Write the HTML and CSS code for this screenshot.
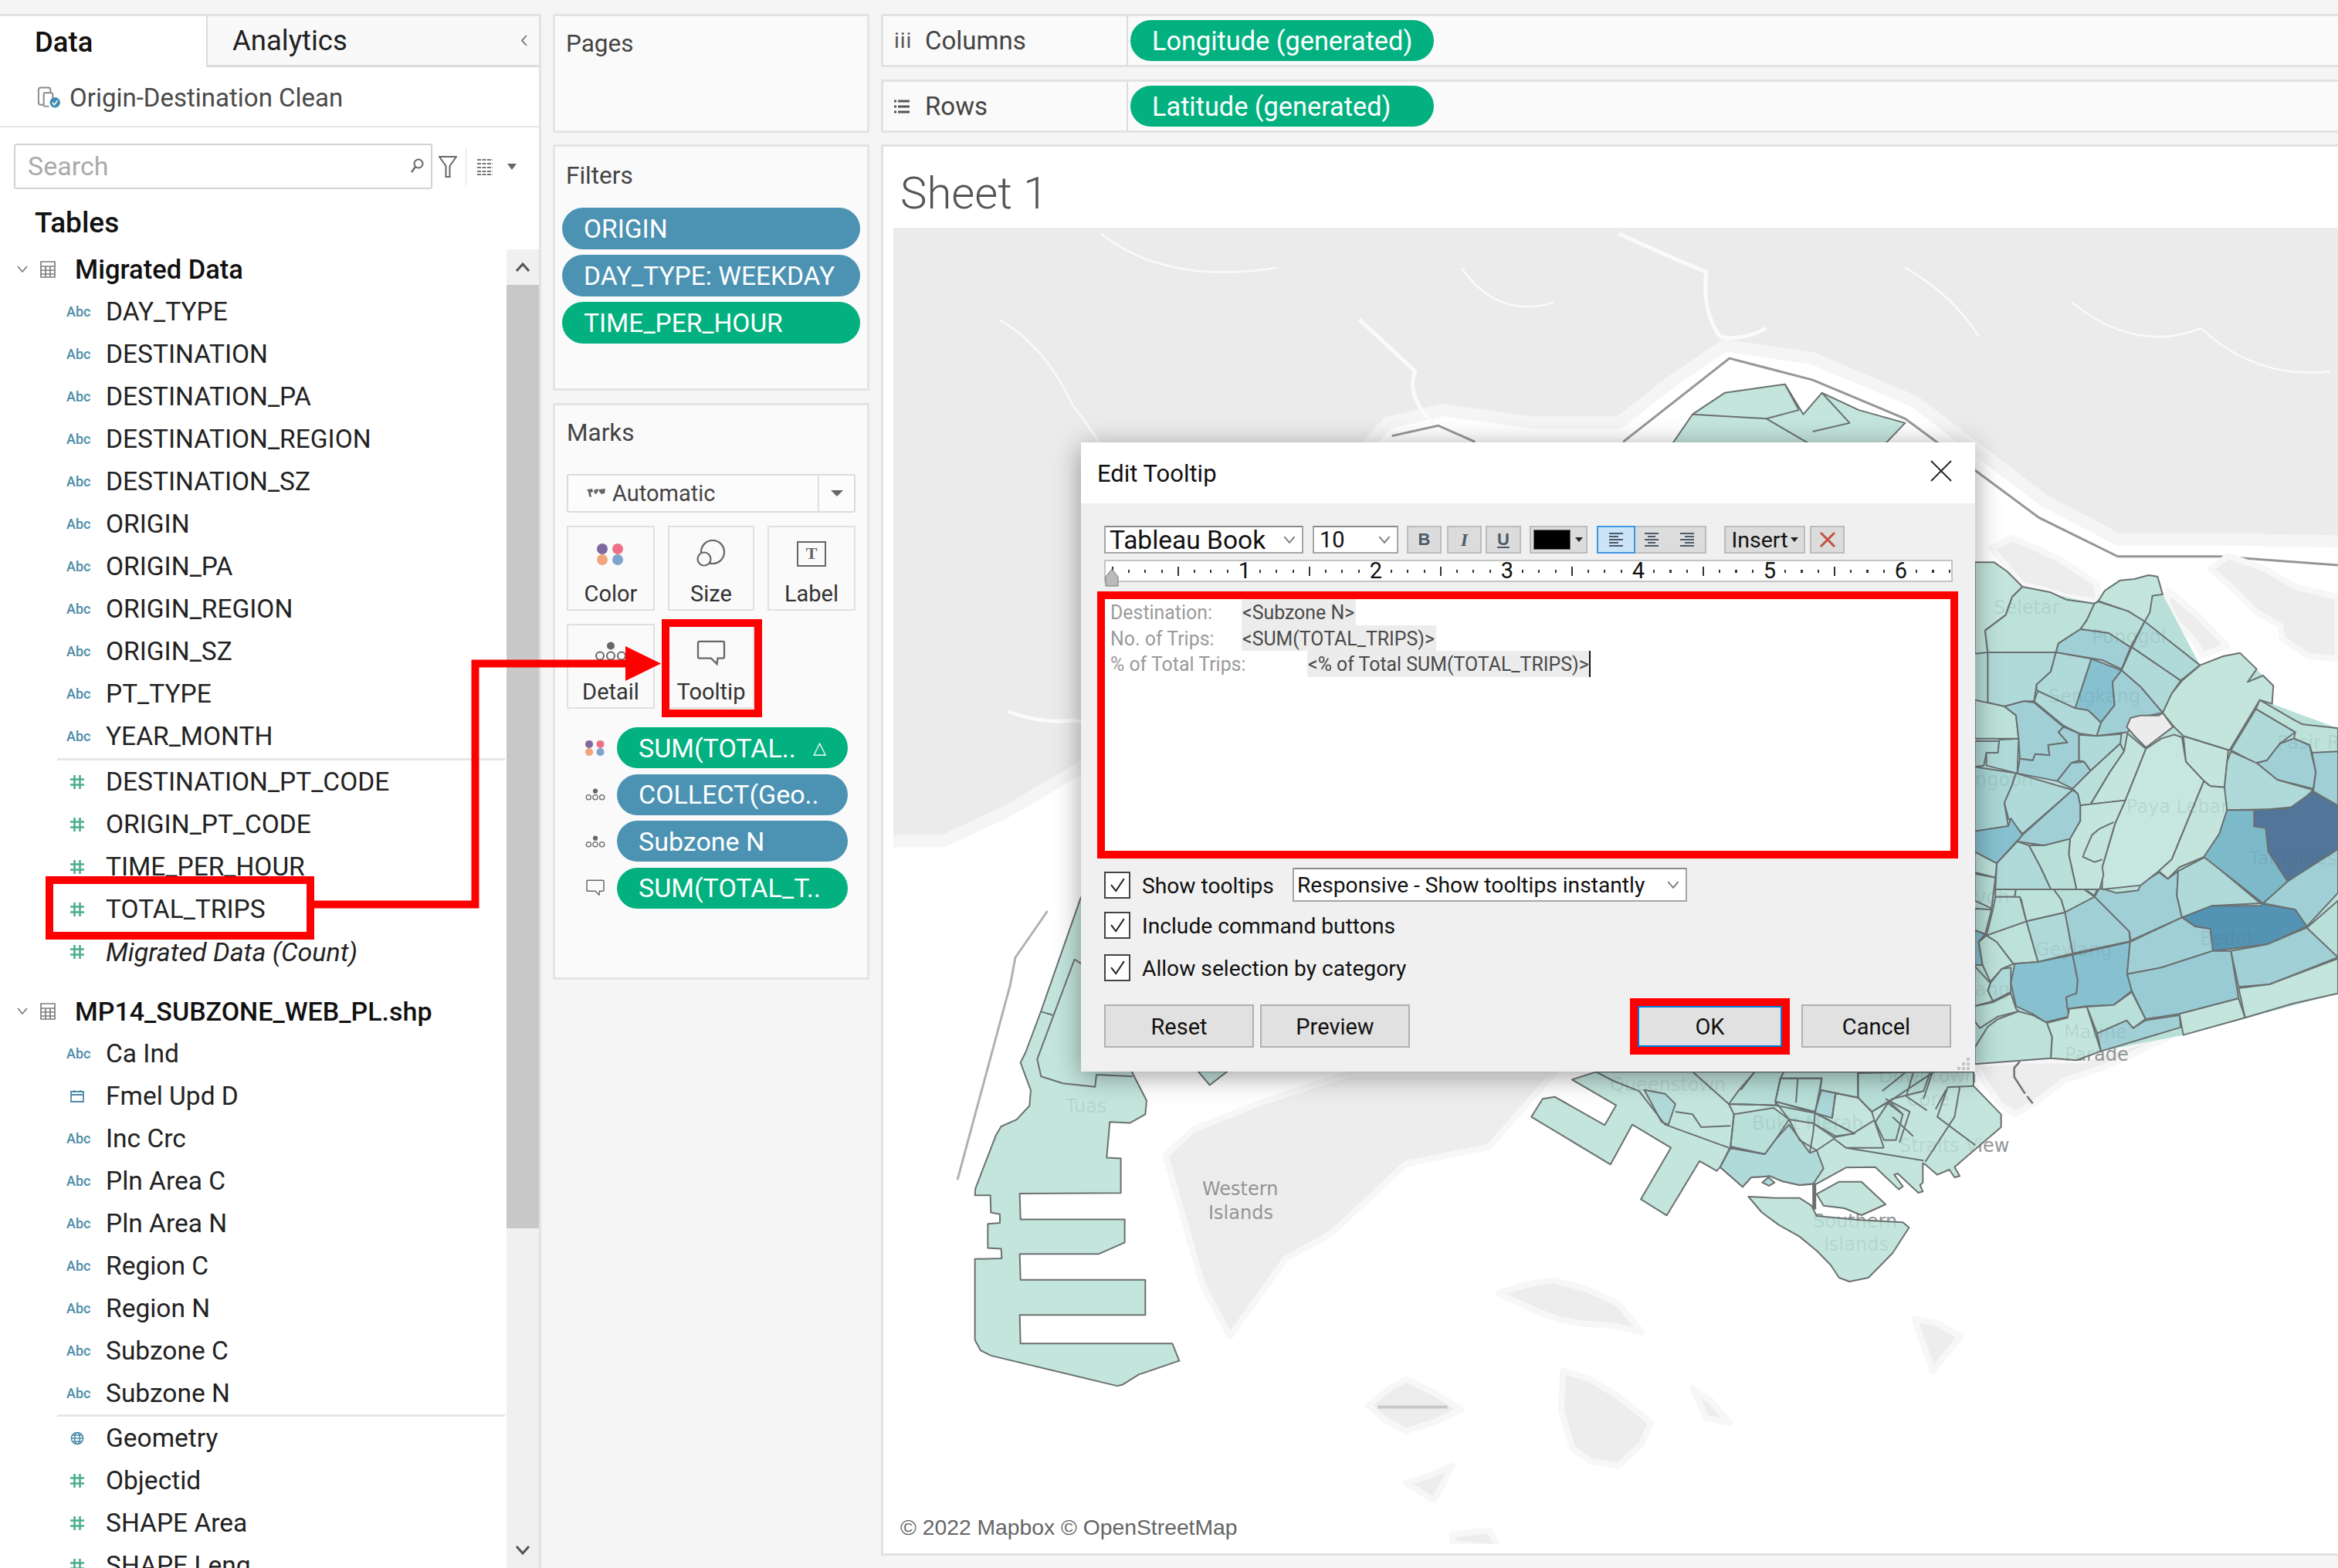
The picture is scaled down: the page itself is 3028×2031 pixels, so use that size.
FILE: index.html
```html
<!DOCTYPE html>
<html lang="en">
<head>
<meta charset="utf-8">
<title>Edit Tooltip</title>
<link rel="stylesheet" href="styles.css">
</head>
<body>
<svg class="defs" width="0" height="0" aria-hidden="true">
  <defs>
    <symbol id="hash" viewBox="0 0 18 18"><path d="M5.5 0V18M12.5 0V18M0 5.5H18M0 12.5H18" fill="none" stroke="currentColor" stroke-width="2.6"/></symbol>
    <symbol id="table" viewBox="0 0 20 22"><path d="M1 1H19V21H1ZM1 7H19M1 12H19M1 17H19M7 7V21M13 7V21" fill="none" stroke="#7d7d7d" stroke-width="1.7"/></symbol>
    <symbol id="chev" viewBox="0 0 14 9"><path d="M1 1L7 8L13 1" fill="none" stroke="#777" stroke-width="1.6"/></symbol>
    <symbol id="dots" viewBox="0 0 36 28"><circle cx="7" cy="7" r="7" fill="#7e6a9f"/><circle cx="27" cy="7" r="7" fill="#ee7088"/><circle cx="7" cy="21" r="7" fill="#f0a67b"/><circle cx="27" cy="21" r="7" fill="#7da3cf"/></symbol>
    <symbol id="detail" viewBox="0 0 42 24"><circle cx="21" cy="5" r="5" fill="#666"/><g fill="none" stroke="#666" stroke-width="2"><circle cx="7" cy="18" r="5"/><circle cx="21" cy="18" r="5"/><circle cx="35" cy="18" r="5"/></g></symbol>
    <symbol id="bubble" viewBox="0 0 40 36"><path d="M4 2H36Q38 2 38 4V23Q38 25 36 25H29L28 33L20 25H4Q2 25 2 23V4Q2 2 4 2Z" fill="none" stroke="#666" stroke-width="2.4"/></symbol>
    <symbol id="cal" viewBox="0 0 18 18"><path d="M1 3H17V16H1ZM1 7H17M5 1V4M13 1V4" fill="none" stroke="#4b8ca8" stroke-width="1.8"/></symbol>
    <symbol id="globe" viewBox="0 0 18 18"><g fill="none" stroke="#4b8ca8" stroke-width="1.5"><circle cx="9" cy="9" r="7.6"/><ellipse cx="9" cy="9" rx="3.4" ry="7.6"/><path d="M1.5 9H16.5M3 5H15M3 13H15"/></g></symbol>
    <symbol id="check" viewBox="0 0 34 35"><path d="M8 17L15 26L27 8" fill="none" stroke="#222" stroke-width="2.2"/></symbol>
    <symbol id="alignl" viewBox="0 0 22 22"><path d="M2 3H20M2 7H14M2 11H20M2 15H14M2 19H20" stroke="#4d5a6b" stroke-width="2"/></symbol>
    <symbol id="alignc" viewBox="0 0 22 22"><path d="M2 3H20M6 7H16M2 11H20M6 15H16M2 19H20" stroke="#4d5a6b" stroke-width="2"/></symbol>
    <symbol id="alignr" viewBox="0 0 22 22"><path d="M2 3H20M8 7H20M2 11H20M8 15H20M2 19H20" stroke="#4d5a6b" stroke-width="2"/></symbol>
  </defs>
</svg>

<div class="app">
  <aside class="data">
    <div class="tabs">
      <div class="tab tab-on">Data</div>
      <div class="tab tab-off">Analytics<svg class="tab-chev" viewBox="0 0 9 15"><path d="M8 1L2 7.5L8 14" fill="none" stroke="#666" stroke-width="1.6"/></svg></div>
    </div>
    <div class="source">
      <svg class="source-ic" viewBox="0 0 32 30">
        <path d="M3 5Q3 2 6 2H16Q19 2 19 5V9M3 5V22Q3 25 6 25H9M10 9H20Q22 9 22 11V16M10 9V27M10 27H17" fill="none" stroke="#8a8a8a" stroke-width="2"/>
        <circle cx="25" cy="22" r="7" fill="#3f8fb4"/><path d="M21.5 22L24 25L28.5 19.5" fill="none" stroke="#fff" stroke-width="1.6"/>
      </svg>
      <span>Origin-Destination Clean</span>
    </div>
    <div class="search-row">
      <div class="search">
        <span>Search</span>
        <svg class="search-ic" viewBox="0 0 18 20"><circle cx="11" cy="7" r="5.5" fill="none" stroke="#666" stroke-width="2"/><path d="M7 11L2 18" stroke="#666" stroke-width="2.4"/></svg>
      </div>
      <svg class="funnel" viewBox="0 0 24 30"><path d="M1 2H23L14.500 14V28H9.500V14Z" fill="none" stroke="#666" stroke-width="2"/></svg>
      <i class="search-div"></i>
      <svg class="grid-ic" viewBox="0 0 22 24"><path d="M1 3H21M1 8H21M1 13H21M1 18H21M1 22H21" stroke="#777" stroke-width="2" stroke-dasharray="5 1.500"/></svg>
      <svg class="caret" viewBox="0 0 12 8"><path d="M0 0H12L6 8Z" fill="#666"/></svg>
    </div>
    <h2 class="tables">Tables</h2>
    <div class="tree-wrap">
      <div class="tree">
        <div class="group"><svg class="g-chev"><use href="#chev"/></svg><svg class="g-table"><use href="#table"/></svg><b>Migrated Data</b></div>
        <div class="row"><span class="abc">Abc</span>DAY_TYPE</div>
        <div class="row"><span class="abc">Abc</span>DESTINATION</div>
        <div class="row"><span class="abc">Abc</span>DESTINATION_PA</div>
        <div class="row"><span class="abc">Abc</span>DESTINATION_REGION</div>
        <div class="row"><span class="abc">Abc</span>DESTINATION_SZ</div>
        <div class="row"><span class="abc">Abc</span>ORIGIN</div>
        <div class="row"><span class="abc">Abc</span>ORIGIN_PA</div>
        <div class="row"><span class="abc">Abc</span>ORIGIN_REGION</div>
        <div class="row"><span class="abc">Abc</span>ORIGIN_SZ</div>
        <div class="row"><span class="abc">Abc</span>PT_TYPE</div>
        <div class="row"><span class="abc">Abc</span>YEAR_MONTH</div>
        <div class="sep"></div>
        <div class="row"><svg class="hash"><use href="#hash"/></svg>DESTINATION_PT_CODE</div>
        <div class="row"><svg class="hash"><use href="#hash"/></svg>ORIGIN_PT_CODE</div>
        <div class="row"><svg class="hash"><use href="#hash"/></svg>TIME_PER_HOUR</div>
        <div class="row"><svg class="hash"><use href="#hash"/></svg>TOTAL_TRIPS</div>
        <div class="row row-it"><svg class="hash"><use href="#hash"/></svg>Migrated Data (Count)</div>
        <div class="group group-2"><svg class="g-chev"><use href="#chev"/></svg><svg class="g-table"><use href="#table"/></svg><b>MP14_SUBZONE_WEB_PL.shp</b></div>
        <div class="row"><span class="abc">Abc</span>Ca Ind</div>
        <div class="row"><svg class="hash cal"><use href="#cal"/></svg>Fmel Upd D</div>
        <div class="row"><span class="abc">Abc</span>Inc Crc</div>
        <div class="row"><span class="abc">Abc</span>Pln Area C</div>
        <div class="row"><span class="abc">Abc</span>Pln Area N</div>
        <div class="row"><span class="abc">Abc</span>Region C</div>
        <div class="row"><span class="abc">Abc</span>Region N</div>
        <div class="row"><span class="abc">Abc</span>Subzone C</div>
        <div class="row"><span class="abc">Abc</span>Subzone N</div>
        <div class="sep sep-2"></div>
        <div class="row"><svg class="hash cal"><use href="#globe"/></svg>Geometry</div>
        <div class="row"><svg class="hash"><use href="#hash"/></svg>Objectid</div>
        <div class="row"><svg class="hash"><use href="#hash"/></svg>SHAPE Area</div>
        <div class="row"><svg class="hash"><use href="#hash"/></svg>SHAPE Leng</div>
      </div>
      <div class="scroll">
        <div class="scroll-btn"><svg viewBox="0 0 20 14"><path d="M2 12L10 3L18 12" fill="none" stroke="#555" stroke-width="3"/></svg></div>
        <div class="scroll-thumb"></div>
        <div class="scroll-track"></div>
        <div class="scroll-btn"><svg viewBox="0 0 20 14"><path d="M2 2L10 11L18 2" fill="none" stroke="#555" stroke-width="3"/></svg></div>
      </div>
    </div>
  </aside>

  <section class="cards">
    <div class="card card-pages"><h3>Pages</h3></div>
    <div class="card card-filters">
      <h3>Filters</h3>
      <div class="pill fpill blue">ORIGIN</div>
      <div class="pill fpill blue">DAY_TYPE: WEEKDAY</div>
      <div class="pill fpill green">TIME_PER_HOUR</div>
    </div>
    <div class="card card-marks">
      <h3>Marks</h3>
      <div class="mark-select">
        <svg class="map-ic" viewBox="0 0 24 14"><path d="M0 2L7 1L8 5L5 6L6 12L3 11L2 5ZM9 3L14 1L15 4L12 8L10 7ZM15 2L24 1L23 7L19 8L17 6Z" fill="#666"/></svg>
        <span class="mark-name">Automatic</span>
        <span class="mark-arrow"><svg viewBox="0 0 16 8"><path d="M0 0H16L8 8Z" fill="#666"/></svg></span>
      </div>
      <div class="mark-btns">
        <div class="mbtn"><svg class="mi mi-dots"><use href="#dots"/></svg>Color</div>
        <div class="mbtn"><svg class="mi mi-size" viewBox="0 0 38 36"><circle cx="21" cy="16" r="15" fill="none" stroke="#666" stroke-width="2.2"/><circle cx="10" cy="25" r="8.500" fill="#fafafa" stroke="#666" stroke-width="2.2"/></svg>Size</div>
        <div class="mbtn"><svg class="mi mi-label" viewBox="0 0 38 33"><rect x="1" y="1" width="36" height="31" fill="none" stroke="#666" stroke-width="2"/><text x="19" y="23" class="label-t">T</text></svg>Label</div>
        <div class="mbtn"><svg class="mi mi-detail"><use href="#detail"/></svg>Detail</div>
        <div class="mbtn"><svg class="mi mi-bubble"><use href="#bubble"/></svg>Tooltip</div>
      </div>
      <div class="mrow"><svg class="mri"><use href="#dots"/></svg><div class="pill mpill green">SUM(TOTAL..<span class="delta">△</span></div></div>
      <div class="mrow"><svg class="mri"><use href="#detail"/></svg><div class="pill mpill blue">COLLECT(Geo..</div></div>
      <div class="mrow"><svg class="mri"><use href="#detail"/></svg><div class="pill mpill blue">Subzone N</div></div>
      <div class="mrow"><svg class="mri"><use href="#bubble"/></svg><div class="pill mpill green">SUM(TOTAL_T..</div></div>
    </div>
  </section>

  <main class="view">
    <div class="shelf">
      <div class="shelf-label"><span class="shelf-ic shelf-ic-c">iii</span>Columns</div>
      <div class="pill spill green">Longitude (generated)</div>
    </div>
    <div class="shelf">
      <div class="shelf-label"><svg class="shelf-ic-r" viewBox="0 0 20 18"><path d="M0 2H3M5 2H20M0 9H3M5 9H20M0 16H3M5 16H20" stroke="#555" stroke-width="3"/></svg>Rows</div>
      <div class="pill spill green">Latitude (generated)</div>
    </div>
    <div class="sheet">
      <div class="sheet-title">Sheet 1</div>
      <div class="map">
        <svg class="map-svg" viewBox="1157 295 1871 1705" preserveAspectRatio="none">
          <defs>
            <g id="labels">
              <text x="2582" y="795">Seletar</text>
              <text x="2709" y="833">Punggol</text>
              <text x="2653" y="910">Sengkang</text>
              <text x="2558" y="1018">ngoon</text>
              <text x="2754" y="1053">Paya Lebar</text>
              <text x="2913" y="1120">Tampines</text>
              <text x="2949" y="970">Pasir R</text>
              <text x="2849" y="1224">Bedok</text>
              <text x="2636" y="1238">Geylang</text>
              <text x="2673" y="1345">Marine</text>
              <text x="2674" y="1374">Parade</text>
              <text x="2558" y="1290">ang</text>
              <text x="2558" y="1170">voh</text>
              <text x="1380" y="1441">Tuas</text>
              <text x="2085" y="1413">Queenstown</text>
              <text x="2269" y="1463">Bukit Merah</text>
              <text x="2433" y="1402">Downtown</text>
              <text x="2469" y="1432">Core</text>
              <text x="2460" y="1492">Straits View</text>
              <text x="2348" y="1590">Southern</text>
              <text x="2362" y="1620">Islands</text>
              <text x="1557" y="1548">Western</text>
              <text x="1565" y="1579">Islands</text>
            </g>
          </defs>

          <g transform="translate(1150 280) scale(1.1976 1.1161)" class="ground">
            <polygon class="land" points="-20,-20 1600,-20 1600,378 1440,375 1330,375 1250,330 1110,215 1000,165 905,150 850,190 790,240 700,240 600,225 540,240 400,410 209,640 130,690 60,725 -20,725"/>
            <polygon class="plain" points="300,1090 330,1060 400,1030 500,995 720,995 650,1080 560,1100 520,1140 480,1180 430,1210 370,1300 340,1240"/>
            <polygon class="plain" points="660,1250 690,1240 720,1235 755,1245 790,1262 815,1295 785,1288 750,1285 725,1280 700,1270"/>
            <polygon class="plain" points="520,1380 540,1362 560,1350 590,1365 620,1385 590,1400 560,1410 535,1395"/>
            <polygon class="plain" points="730,1340 760,1350 790,1370 825,1400 815,1425 790,1450 760,1445 740,1430 728,1385"/>
            <polygon class="plain" points="870,1360 890,1375 910,1400 885,1395"/>
            <polygon class="plain" points="560,1470 585,1462 610,1450 600,1472 590,1490 575,1480"/>
            <polygon class="plain" points="610,1530 650,1525 660,1545 610,1540"/>
            <polygon class="plain" points="1110,1280 1135,1285 1160,1300 1145,1320 1130,1340 1120,1310"/>
            <path class="river" d="M790,20Q840,45 885,65Q880,110 900,140Q925,145 950,130"/>
            <path class="river" d="M510,120Q540,150 570,180Q560,210 590,240"/>
            <path class="river" d="M130,575Q170,590 200,585Q240,595 270,560"/>
            <path class="river river-thin" d="M230,20Q300,80 420,60M120,120Q170,150 200,220Q230,260 260,320M1280,100Q1350,160 1420,130Q1480,190 1560,180M620,60Q660,120 720,100M1100,60Q1150,90 1180,140"/>
            <path class="road" d="M530,1382H605"/>
            <path class="strait" d="M545,255L595,243L635,262M795,262L910,165L1000,190L1100,235L1245,350L1330,395L1440,395L1568,405"/>
          </g>

          <g transform="translate(2556 680) scale(.3333)" class="ground">
            <polygon class="plain" points="70,90 150,50 330,130 480,230 485,300 360,280 270,250 190,235 120,150"/>
            <polygon class="plain" points="755,255 870,350 985,470 890,505 850,440 790,380 750,300"/>
            <polygon class="plain" points="920,170 990,120 1130,170 1250,240 1416,280 1416,520 1300,510 1200,440 1190,390 1100,340 1000,240"/>
          </g>
          <g transform="translate(2556 1100) scale(.3333)" class="ground">
            <polygon class="plain" points="5,835 200,820 420,820 800,700 760,730 500,850 350,900 230,990 160,1030 100,990 30,880"/>
            <path class="dash" d="M180,825L158,850L158,885L200,950M208,960L230,988"/>
          </g>

          <use href="#labels" class="lab-under"/>

          <!-- north strip above the dialog -->
          <g transform="translate(1150 280) scale(1.1976 1.1161)" class="zones">
            <polygon class="c1" points="835,285 870,230 905,205 970,195 990,230 1010,205 1050,225 1100,240 1060,285"/>
            <path d="M870,230L950,235L1030,285M970,195L985,225L950,235M1010,205L1040,240L1000,250"/>
          </g>

          <!-- Tuas -->
          <g transform="translate(1200 1180) scale(.3333 .4464)" class="zones">
            <path class="strait thin" d="M120,780L325,215L345,135L470,0"/>
            <polygon class="c1" points="600,-40 445,290 385,410 365,440 405,520 400,565 350,605 290,625 270,650 190,805 188,825 248,825 250,875 285,880 285,905 238,908 238,978 290,980 292,1008 188,1010 188,1245 210,1275 250,1290 740,1378 760,1375 825,1345 982,1305 955,1255 365,1255 362,1172 850,1172 850,1070 365,1070 362,995 670,995 770,962 770,895 365,895 362,820 755,818 755,718 700,716 712,612 790,615 850,590 855,550 800,470 700,-40"/>
            <path d="M575,140L430,430L445,480L530,500L655,510L660,475L800,480M445,292L490,302M575,140L605,155"/>
            <polygon class="c1" points="1055,465 1100,505 1170,465"/>
          </g>

          <!-- south-central -->
          <g transform="translate(1960 1380) scale(.4464 .3333)" class="zones">
            <polygon class="c1" points="170,55 240,25 1335,25 1335,80 1415,190 1415,240 1280,395 1295,430 1280,435 1265,405 1230,425 1195,385 1188,380 1188,455 1180,465 1188,490 1175,495 1115,420 1105,425 1130,470 1118,482 1050,395 965,397 880,460 830,465 780,450 745,430 690,435 665,472 600,395 590,410 540,372 445,583 370,520 457,320 345,230 282,385 52,200 85,130 120,122 265,232 298,155"/>
            <polygon class="c2" points="625,150 760,155 775,50 785,25 700,25 655,95"/>
            <polygon class="c3" points="380,95 440,110 470,150 450,230 430,220"/>
            <polygon class="c2" points="640,190 755,165 800,210 760,290 730,345 630,315"/>
            <polygon class="c3" points="630,320 730,345 760,290 800,230 860,340 880,330 900,400 870,460 830,465 780,450 745,430 690,435 665,472 600,395"/>
            <polygon class="c3b" points="890,95 935,105 925,205 875,185"/>
            <polygon class="c2" points="775,50 895,50 895,90 875,180 760,140"/>
            <polygon class="c2" points="760,140 875,185 990,265 935,275 870,225 800,210"/>
            <polygon class="c2" points="1050,220 1090,140 1130,190 1110,290 1075,290"/>
            <polygon class="c1b" points="785,25 1000,25 1000,125 890,95 895,50 775,50"/>
            <polygon class="c2" points="1000,30 1210,25 1190,100 1100,130 1040,180 1000,125"/>
            <path d="M240,25L290,60L365,100L440,230L625,320L730,345M470,180L520,190L545,240L630,235M520,25L625,150L760,155L875,185L990,265M625,150L640,190L630,315L600,395M660,95L700,25M775,50L760,140M825,50L820,145M895,50L875,185L870,260L860,340M775,50L895,50M935,105L925,200M890,95L1000,125M1000,30L1000,125L1040,180L1085,145L1130,190M1040,180L1050,225L1075,320M1085,145L1220,25M1140,25L1070,100M800,210L830,290L880,330L930,285L965,320L1190,370M870,225L930,280L985,265L1045,215M965,320L1075,320M1335,80L1260,85L1230,200L1340,310M1295,85L1280,200L1195,375M1255,95L1225,170M1080,130L1150,180L1120,300M1100,200L1160,275M1215,30L1190,130M1160,30L1140,120L1200,175"/>
            <polygon class="c1" points="682,510 760,515 830,515 865,545 880,585 1000,600 1130,610 1148,630 1100,730 1030,825 975,840 945,825 920,775 880,720 830,665 770,620 720,570"/>
            <polygon class="c1" points="880,500 945,452 1010,452 1080,540 1010,582 960,555 900,545"/>
            <polygon class="c3" points="722,455 740,435 758,455 742,468"/>
            <path class="cause" d="M873,460V560"/>
          </g>

          <!-- east, lower half -->
          <g transform="translate(2556 1100) scale(.3333)" class="zones">
            <polygon class="base" points="5,-1115 190,-1020 470,-955 715,-1060 735,-990 880,-715 1035,-763 1165,-635 1160,-565 1416,-470 1416,560 815,722 495,785 300,812 5,835"/>
            <polygon class="c2" points="5,95 85,110 70,230 5,200"/>
            <polygon class="c1b" points="5,230 70,235 45,330 5,315"/>
            <polygon class="c5" points="5,315 45,330 20,360 35,450 5,450"/>
            <polygon class="c1b" points="20,360 50,335 90,360 155,445 110,465 65,515 35,450"/>
            <polygon class="c3" points="65,520 110,465 145,460 145,555 75,590 55,550"/>
            <polygon class="c1b" points="5,455 65,520 55,550 75,590 5,610"/>
            <polygon class="c1b" points="5,610 75,595 145,560 165,620 175,630 95,650 25,695 5,670"/>
            <polygon class="c3" points="90,55 130,10 210,0 230,30 295,135 240,125 175,88 140,95 85,100"/>
            <polygon class="c2" points="215,0 370,0 370,30 400,135 470,185 430,225 355,245 340,195 295,135 230,30"/>
            <polygon class="c2" points="370,0 500,50 510,90 470,180 400,135"/>
            <polygon class="c4" points="470,185 490,150 555,170 640,160 650,135 720,90 755,115 795,85 790,180 810,265 610,355 605,320"/>
            <polygon class="c3" points="795,85 900,30 1115,210 925,220 810,265 790,180"/>
            <polygon class="c6" points="900,30 1000,-20 1220,125 1125,210 1115,210"/>
            <polygon class="c4" points="1220,125 1416,-10 1416,170 1295,300 1250,235 1125,210"/>
            <polygon class="c2" points="1295,305 1416,200 1416,420 1340,365"/>
            <polygon class="c7" points="810,265 925,220 1115,220 1125,212 1250,235 1295,300 1140,370 930,395 920,310 860,300 820,270"/>
            <polygon class="c4" points="355,245 470,185 605,320 608,358 385,405"/>
            <polygon class="c3" points="205,280 355,245 385,405 250,438"/>
            <polygon class="c1b" points="50,335 205,280 250,438 155,445 90,360"/>
            <polygon class="c5" points="160,445 250,438 385,410 405,510 400,560 360,575 370,650 280,672 230,640 165,610 145,520"/>
            <polygon class="c5" points="385,410 608,360 597,485 615,550 545,605 440,610 365,620 360,575 400,560 405,510"/>
            <polygon class="c4" points="608,360 810,265 860,300 920,310 930,395 730,460 597,485"/>
            <polygon class="c4b" points="597,485 730,460 930,395 1000,395 1030,580 800,640 668,660 615,550"/>
            <polygon class="c4" points="1000,395 1140,370 1295,305 1416,420 1150,525 1030,535"/>
            <polygon class="c1" points="1030,540 1150,525 1416,425 1416,560 1240,600 1055,655"/>
            <polygon class="c1" points="800,640 1030,580 1055,655 815,722"/>
            <polygon class="c4" points="480,715 595,665 620,695 668,665 800,645 805,692 495,785"/>
            <polygon class="c2" points="440,612 545,605 615,555 668,660 620,695 595,665 480,715"/>
            <polygon class="c1" points="285,675 365,655 372,620 440,612 495,785 400,820 300,812 305,730"/>
            <polygon class="c1b" points="5,835 300,812 305,730 285,675 230,645 175,630 95,660 55,690 5,770"/>
            <polygon class="c1b" points="85,100 140,95 175,88 240,125 165,155 160,185 85,185"/>
            <polygon class="c1b" points="160,185 165,155 240,125 295,135 340,195 355,245 205,280 185,195"/>
            <polygon class="c2" points="50,335 75,235 85,185 180,185 205,280"/>
          </g>

          <!-- east, upper half -->
          <g transform="translate(2556 680) scale(.3333)" class="zones">
            <polygon class="c1" points="5,145 80,145 130,180 190,240 150,280 125,350 45,410 55,495 5,500"/>
            <polygon class="c1b" points="190,240 300,262 360,290 470,305 440,370 415,405 330,460 320,495 55,495 45,410 125,350 150,280"/>
            <polygon class="c1" points="470,305 485,295 510,255 570,215 625,210 680,195 715,200 735,270 695,275 685,340 665,375 600,335 485,295"/>
            <polygon class="c2" points="485,298 600,335 665,375 610,475 525,420 415,405 440,370 470,305"/>
            <polygon class="c4" points="415,405 525,420 610,475 575,560 500,525 320,495 330,460"/>
            <polygon class="c3" points="665,375 880,545 805,605 615,475"/>
            <polygon class="c3" points="615,475 805,605 770,655 735,730 650,630 575,565"/>
            <polygon class="c3" points="55,495 320,495 300,570 245,620 235,685 195,685 120,705 55,690"/>
            <polygon class="c3" points="320,495 458,520 395,712 295,680 245,640 245,620 300,570"/>
            <polygon class="c5" points="458,520 575,565 540,610 548,700 495,768 445,720 395,712"/>
            <polygon class="c4" points="575,565 650,630 735,730 660,745 620,760 600,805 478,820 495,768 548,700 540,610"/>
            <polygon class="c3" points="250,645 395,712 445,720 495,768 478,820 410,810 350,780 235,685"/>
            <polygon class="c1b" points="5,680 120,705 165,740 175,830 5,830"/>
            <polygon class="c4" points="120,705 195,685 235,690 350,785 330,805 365,845 290,855 295,895 240,890 230,915 180,908 175,830 165,740"/>
            <polygon class="c4" points="350,785 410,810 410,915 380,925 325,995 170,965 180,908 230,915 240,890 295,895 290,855 365,845 330,805"/>
            <polygon class="c4" points="380,925 430,920 455,955 385,1025 325,995"/>
            <polygon class="c3" points="410,815 478,820 575,812 570,850 455,955 430,920 410,915"/>
            <polygon class="c2" points="385,1025 455,955 570,850 585,880 530,960 455,1085 415,1090 405,1045"/>
            <polygon class="c1" points="598,810 670,870 590,1070 455,1085 530,960 585,880"/>
            <polygon class="c1" points="815,820 990,875 975,1020 920,1015 895,995 825,920"/>
            <polygon class="c1c" points="670,870 730,830 780,815 810,825 825,920 895,995 770,1300 720,1345 650,1400 500,1416 500,1330 550,1160 590,1070"/>
            <polygon class="c1" points="895,995 920,1015 985,1020 985,1110 955,1200 895,1290 800,1330 755,1375 720,1345 770,1300"/>
            <polygon class="c1" points="735,730 770,655 810,605 880,545 970,510 1035,497 1100,560 1065,610 1125,585 1165,625 1160,695 1112,680 995,875 815,820 775,780"/>
            <polygon class="lake" points="595,785 610,750 650,740 720,740 735,730 775,785 670,865 630,825"/>
            <polygon class="c1b" points="1112,680 1250,760 1280,775 1416,790 1416,885 1315,885 1305,855 1245,830 1250,805 1097,715"/>
            <polygon class="c3" points="1097,715 1250,805 1190,850 1140,915 1095,925 1000,875"/>
            <polygon class="c4" points="1245,830 1305,855 1330,960 1320,1025 1180,990 1100,925 1140,915 1190,850"/>
            <polygon class="c3" points="1000,880 1100,925 1180,990 1320,1030 1250,1095 1150,1105 985,1108 975,1020 985,920"/>
            <polygon class="c8" points="1320,1035 1416,1090 1416,1260 1220,1385 1145,1270 1135,1178 1090,1172 1090,1108 1230,1100"/>
            <polygon class="c6" points="985,1108 1090,1108 1090,1172 1135,1178 1145,1270 1220,1385 1125,1470 895,1290 955,1200"/>
            <polygon class="c4" points="1315,885 1416,880 1416,1090 1320,1035 1330,960"/>
            <polygon class="c3" points="5,840 100,840 95,885 50,885 40,935 5,940"/>
            <polygon class="c3" points="100,835 175,830 170,965 50,935 50,885 95,885"/>
            <polygon class="c3b" points="5,940 165,965 150,1010 120,1080 135,1170 5,1190"/>
            <polygon class="c3" points="165,965 385,1030 190,1200 135,1140 120,1080 150,1010"/>
            <polygon class="c4" points="385,1030 405,1045 415,1090 415,1150 375,1220 275,1245 170,1230 190,1205"/>
            <polygon class="c5" points="5,1190 135,1170 145,1140 190,1205 90,1315 5,1270"/>
            <polygon class="c1" points="415,1090 455,1085 590,1070 550,1160 500,1330 505,1360 490,1416 400,1416 370,1280 375,1220 415,1150"/>
            <polygon class="c2" points="375,1220 370,1280 400,1416 300,1416 260,1330 215,1245 275,1245"/>
            <polygon class="c3" points="90,1315 170,1230 215,1245 260,1330 300,1416 85,1416"/>
            <polygon class="c1b" points="5,1270 90,1315 85,1370 5,1350"/>
            <path d="M545,1155L490,1180L460,1205L430,1275L425,1290L470,1310L500,1300"/>
          </g>
          <use href="#labels" class="lab-over"/>
        </svg>
        <div class="copyright">© 2022 Mapbox © OpenStreetMap</div>
      </div>
    </div>
  </main>
</div>

<svg class="marks-over" viewBox="0 0 3028 2031" aria-hidden="true">
  <rect class="red" x="64" y="1140" width="338" height="72"/>
  <rect class="red" x="862" y="807" width="120" height="117"/>
  <path class="red" d="M407 1171.500H615.500V859.500H815"/>
  <polygon class="red-f" points="810,837 856,859.500 810,882"/>
</svg>

<div class="dialog">
  <div class="dlg-head">
    <span>Edit Tooltip</span>
    <svg class="dlg-x" viewBox="0 0 28 28"><path d="M1 1L27 27M27 1L1 27" stroke="#222" stroke-width="1.800"/></svg>
  </div>
  <div class="dlg-body">
    <div class="tools">
      <div class="sel sel-font">Tableau Book<svg class="sel-c"><use href="#chev"/></svg></div>
      <div class="sel sel-size">10<svg class="sel-c"><use href="#chev"/></svg></div>
      <div class="tb tb-b">B</div>
      <div class="tb tb-i">I</div>
      <div class="tb tb-u">U</div>
      <div class="tb tb-color"><i class="swatch"></i><svg viewBox="0 0 10 6"><path d="M0 0H10L5 6Z" fill="#222"/></svg></div>
      <div class="align">
        <div class="al al-on"><svg><use href="#alignl"/></svg></div>
        <div class="al"><svg><use href="#alignc"/></svg></div>
        <div class="al"><svg><use href="#alignr"/></svg></div>
      </div>
      <div class="tb tb-ins">Insert<svg viewBox="0 0 10 6"><path d="M0 0H10L5 6Z" fill="#222"/></svg></div>
      <div class="tb tb-x"><svg viewBox="0 0 24 24"><path d="M3 3L21 21M21 3L3 21" stroke="#c0513c" stroke-width="3"/></svg></div>
    </div>
    <div class="ruler">
      <svg class="ruler-mark" viewBox="0 0 18 23"><path d="M9 0L17 10V22H1V10Z" fill="#bbb" stroke="#777"/></svg>
      <span>1</span><span>2</span><span>3</span><span>4</span><span>5</span><span>6</span>
    </div>
    <div class="editor">
      <div class="ed-line"><span class="ed-k ed-k1">Destination:</span><span class="ed-v">&lt;Subzone N&gt;</span></div>
      <div class="ed-line"><span class="ed-k ed-k1">No. of Trips:</span><span class="ed-v">&lt;SUM(TOTAL_TRIPS)&gt;</span></div>
      <div class="ed-line"><span class="ed-k ed-k2">% of Total Trips:</span><span class="ed-v ed-cur">&lt;% of Total SUM(TOTAL_TRIPS)&gt;</span></div>
    </div>
    <div class="opt opt-1">
      <svg class="cb"><use href="#check"/></svg><span>Show tooltips</span>
      <div class="sel sel-resp">Responsive - Show tooltips instantly<svg class="sel-c"><use href="#chev"/></svg></div>
    </div>
    <div class="opt opt-2"><svg class="cb"><use href="#check"/></svg><span>Include command buttons</span></div>
    <div class="opt opt-3"><svg class="cb"><use href="#check"/></svg><span>Allow selection by category</span></div>
    <div class="dlg-btns">
      <div class="btn">Reset</div>
      <div class="btn">Preview</div>
      <div class="btn btn-ok">OK</div>
      <div class="btn">Cancel</div>
    </div>
    <svg class="grip" viewBox="0 0 18 18"><path d="M13 1h4v4h-4zM7 7h4v4H7zM13 7h4v4h-4zM1 13h4v4H1zM7 13h4v4H7zM13 13h4v4h-4z" fill="#c4c4c4"/></svg>
  </div>
</div>
</body>
</html>
```

FILE: styles.css
```css
* { box-sizing: border-box; }
html, body { margin: 0; padding: 0; }
body {
  width: 3028px; height: 2031px; overflow: hidden; position: relative;
  background: #f5f5f5; color: #222;
  font-family: Roboto, "Liberation Sans", sans-serif; font-size: 33.500px;
}
.defs { position: absolute; }
.app { display: grid; grid-template-columns: 701px 425px 1fr; padding-top: 18px; height: 2031px; }

/* data pane */
.data { background: #fff; border-top: 3px solid #e2e2e2; border-right: 3px solid #e2e2e2; display: flex; flex-direction: column; height: 2013px; overflow: hidden; }
.tabs { display: flex; height: 66px; flex: none; }
.tab { display: flex; align-items: center; font-size: 36.500px; }
.tab-on { width: 267px; padding-left: 45px; font-weight: 500; color: #111; }
.tab-off { flex: 1; background: #f9f9f9; border-left: 2px solid #dcdcdc; border-bottom: 3px solid #dcdcdc; padding-left: 32px; position: relative; color: #222; }
.tab-chev { width: 9px; height: 15px; position: absolute; right: 15px; top: 24px; }
.source { height: 78px; flex: none; border-bottom: 2px solid #e6e6e6; display: flex; align-items: center; padding: 2px 0 0 47px; color: #4a4a4a; font-size: 33px; }
.source-ic { width: 31px; height: 30px; margin-right: 12px; }
.search-row { display: flex; align-items: center; height: 59px; margin-top: 21px; padding-left: 18px; flex: none; }
.search { width: 542px; height: 59px; border: 2px solid #d2d2d2; border-radius: 3px; display: flex; align-items: center; justify-content: space-between; padding: 0 9px 2px 16px; color: #aaa; font-size: 34px; }
.search-ic { width: 18px; height: 20px; }
.funnel { width: 24px; height: 30px; margin-left: 8px; }
.search-div { width: 1px; height: 48px; background: #ddd; margin-left: 11px; }
.grid-ic { width: 22px; height: 24px; margin-left: 13px; }
.caret { width: 12px; height: 8px; margin-left: 18px; }
.tables { margin: 8px 0 0; height: 70px; padding-left: 45px; display: flex; align-items: center; font-size: 37px; font-weight: 500; color: #111; flex: none; }
.tree-wrap { display: flex; flex: 1; min-height: 0; }
.tree { width: 656px; flex: none; overflow: hidden; margin-top: -2px; }
.group { height: 55px; display: flex; align-items: center; padding-left: 22px; }
.group b { font-weight: 500; color: #111; margin-left: 25px; font-size: 34.500px; }
.group-2 b { font-size: 34px; }
.group-2 { margin-top: 22px; }
.g-chev { width: 14px; height: 9px; margin-right: 16px; }
.g-table { width: 20px; height: 22px; }
.row { height: 55px; display: flex; align-items: center; padding-left: 86px; color: #222; }
.row-it { font-style: italic; font-size: 34px; }
.abc { width: 51px; font-size: 18px; font-weight: 500; color: #4b8ca8; }
.hash { width: 18px; height: 18px; margin: 0 28px 0 5px; color: #4cae8a; flex: none; }
.sep { height: 3px; margin: 1px 2px 0 74px; background: #e6e6e6; width: 580px; }
.sep-2 { margin-top: 0; }
.scroll { width: 42px; display: flex; flex-direction: column; background: #f0f0f0; }
.scroll-btn { height: 46px; display: flex; align-items: center; justify-content: center; flex: none; }
.scroll-btn svg { width: 20px; height: 14px; }
.scroll-thumb { height: 1222px; background: #c8c8c8; flex: none; }
.scroll-track { flex: 1; }

/* cards */
.cards { margin-left: 15px; width: 410px; display: flex; flex-direction: column; }
.card { background: #fafafa; border: 3px solid #e4e4e4; flex: none; padding-left: 10px; }
.card h3 { margin: 0; font-weight: 400; font-size: 31.500px; color: #444; display: flex; align-items: center; padding-left: 4px; }
.card-pages { height: 154px; margin-bottom: 15px; }
.card-pages h3 { height: 70px; }
.card-filters { height: 319px; margin-bottom: 16px; }
.card-filters h3 { height: 74px; margin-bottom: 5px; }
.card-marks { height: 747px; padding-left: 15px; }
.card-marks h3 { height: 70px; margin-bottom: 19px; padding-left: 0; }
.pill { border-radius: 28px; color: #fff; display: flex; align-items: center; padding-left: 28px; font-size: 34px; }
.green { background: #02b17f; }
.blue { background: #4c93b3; }
.fpill { width: 386px; height: 54px; margin: 0 0 7px -1px; font-size: 33.500px; }
.mark-select { width: 374px; height: 50px; border: 2px solid #dcdcdc; border-radius: 3px; display: flex; align-items: center; padding-left: 24px; background: #fcfcfc; }
.map-ic { width: 24px; height: 14px; }
.mark-name { font-size: 29px; color: #444; margin-left: 9px; flex: 1; }
.mark-arrow { width: 47px; height: 46px; border-left: 2px solid #e0e0e0; display: flex; align-items: center; justify-content: center; }
.mark-arrow svg { width: 16px; height: 8px; }
.mark-btns { display: grid; grid-template-columns: 114px 112px 114px; grid-auto-rows: 110px; gap: 17px; margin-top: 17px; }
.mbtn { border: 2px solid #e0e0e0; display: flex; flex-direction: column; align-items: center; font-size: 29px; color: #333; padding-top: 16px; line-height: 36px; }
.mi { display: block; flex: none; }
.mi-dots { width: 36px; height: 34px; margin: 2px 0 16px; }
.mi-size { width: 38px; height: 36px; margin: 0 0 16px; }
.mi-label { width: 38px; height: 33px; margin: 2px 0 17px; }
.mi-detail { width: 42px; height: 25px; margin: 5px 0 22px; }
.mi-bubble { width: 38px; height: 34px; margin: 3px 0 15px; }
.label-t { font: bold 22px "Liberation Serif", serif; fill: #666; text-anchor: middle; }
.mrow { display: flex; align-items: center; height: 53px; margin-bottom: 7.500px; padding-left: 24px; }
.mark-btns + .mrow { margin-top: 24px; }
.mri { width: 26px; height: 22px; margin-right: 15px; flex: none; }
.mpill { width: 299px; height: 53px; position: relative; }
.delta { position: absolute; right: 28px; font-size: 22px; }

/* view */
.view { margin-left: 15px; display: flex; flex-direction: column; width: 1887px; }
.shelf { height: 69px; margin-bottom: 16px; background: #fafafa; border: 3px solid #e2e2e2; border-right: 0; display: flex; align-items: center; flex: none; }
.shelf + .shelf { margin-bottom: 15px; }
.shelf-label { width: 317px; height: 100%; border-right: 2px solid #dcdcdc; display: flex; align-items: center; padding-left: 14px; color: #444; font-size: 33px; }
.shelf-ic { width: 40px; font-size: 28px; color: #555; letter-spacing: 1px; }
.shelf-ic-r { width: 20px; height: 18px; margin-right: 20px; }
.spill { width: 393px; height: 53px; margin-left: 3px; font-size: 34.300px; }
.sheet { height: 1828px; background: #fff; border: 3px solid #e2e2e2; border-right: 0; flex: none; padding-left: 13px; }
.sheet-title { height: 105px; display: flex; align-items: center; padding: 15px 0 0 9px; font-size: 58px; font-weight: 300; color: #555; }
.map { position: relative; height: 1705px; width: 1871px; overflow: hidden; background: #fff; }
.map-svg { width: 1871px; height: 1705px; display: block; }
.ground polygon, .ground path, .zones polygon, .zones path { vector-effect: non-scaling-stroke; }
.land { fill: #ebebeb; stroke: #f5f5f5; stroke-width: 16; }
.plain { fill: #ededed; stroke: #f7f7f7; stroke-width: 8; stroke-linejoin: round; }
.river { fill: none; stroke: #fafafa; stroke-width: 5; }
.river-thin { stroke-width: 2.500; }
.road { fill: none; stroke: #c8c8c8; stroke-width: 4; }
.strait { fill: none; stroke: #969696; stroke-width: 3; }
.dash { fill: none; stroke: #6d7173; stroke-width: 2.500; }
.zones polygon, .zones path { stroke: #6b7071; stroke-width: 2; stroke-linejoin: round; fill: none; }
.zones .strait { stroke: #b0b0b0; stroke-width: 3; }
.zones .cause { stroke-width: 5; }
.zones .base { fill: #b8e0d9; stroke: none; }
.zones .c1 { fill: #c3e5dc; }
.zones .c1b { fill: #bde2da; }
.zones .c1c { fill: #c6e7df; }
.zones .c2 { fill: #b8e0d9; }
.zones .c3 { fill: #b0dad9; }
.zones .c3b { fill: #a9d6d6; }
.zones .c4 { fill: #a0d0d6; }
.zones .c4b { fill: #99cbd4; }
.zones .c5 { fill: #87c1d0; }
.zones .c6 { fill: #7cbaca; }
.zones .c7 { fill: #5393b3; }
.zones .c8 { fill: #52769a; }
.zones .lake { fill: #ececec; }
#labels text { font-family: "DejaVu Sans", sans-serif; font-size: 24px; }
.lab-under { fill: #9c9c9c; }
.lab-over { fill: rgba(80, 100, 100, .12); }
.copyright { position: absolute; left: 9px; bottom: 7px; padding: 0 5px 0 0; font-family: "Liberation Sans", sans-serif; font-size: 28.300px; line-height: 30px; color: #666; background: rgba(255, 255, 255, .65); }

/* annotations */
.marks-over { position: absolute; left: 0; top: 0; width: 3028px; height: 2031px; pointer-events: none; }
.red { fill: none; stroke: #f00; stroke-width: 10; }
.red-f { fill: #f00; }

/* dialog */
.dialog { position: absolute; left: 1400px; top: 573px; width: 1158px; height: 815px; background: #f0f0f0; box-shadow: 0 6px 32px rgba(0, 0, 0, .38); font-size: 28.200px; color: #111; }
.dlg-head { height: 79px; background: #fff; display: flex; align-items: center; justify-content: space-between; padding: 2px 30px 0 21px; font-size: 31px; }
.dlg-x { width: 28px; height: 28px; margin-bottom: 8px; }
.dlg-body { padding: 29px 31px 0 30px; position: relative; }
.tools { display: flex; height: 36px; }
.tools > * { flex: none; }
.sel { background: #fff; border: 2px solid #a6a6a6; border-top-color: #8a8a8a; display: flex; align-items: center; padding-left: 5px; position: relative; }
.sel-c { width: 16px; height: 10px; position: absolute; right: 8px; top: 50%; margin-top: -5px; }
.sel-font { width: 258px; font-size: 33.500px; }
.sel-size { width: 111px; margin-left: 12px; padding-left: 7px; font-size: 29px; }
.tb { background: #dcdcdc; border: 2px solid #bcbcbc; display: flex; align-items: center; justify-content: center; color: #4d5a6b; font-family: "Liberation Serif", serif; }
.tb svg { flex: none; }
.tb-b { width: 45px; margin-left: 11px; font-weight: bold; font-size: 22px; font-family: "Liberation Sans", sans-serif; }
.tb-i { width: 45px; margin-left: 7px; font-style: italic; font-weight: bold; font-size: 24px; }
.tb-u { width: 46px; margin-left: 5px; text-decoration: underline; font-weight: bold; font-size: 22px; font-family: "Liberation Sans", sans-serif; }
.tb-color { width: 75px; margin-left: 11px; justify-content: flex-start; padding-left: 4px; }
.swatch { width: 46px; height: 24px; background: #000; box-shadow: 0 0 0 1px #666; }
.tb-color svg { width: 10px; height: 6px; margin-left: 7px; }
.align { width: 142px; margin-left: 12px; display: flex; background: #dcdcdc; border: 2px solid #bcbcbc; }
.al { flex: 1; display: flex; align-items: center; justify-content: center; }
.al svg { width: 22px; height: 22px; }
.al-on { background: #cce4f7; box-shadow: 0 0 0 2px #3d96e0; }
.tb-ins { width: 105px; margin-left: 23px; font-family: Roboto, sans-serif; color: #111; font-size: 28.500px; }
.tb-ins svg { width: 10px; height: 6px; margin-left: 3px; }
.tb-x { width: 45px; margin-left: 6px; }
.tb-x svg { width: 24px; height: 24px; }
.ruler {
  width: 1099px; height: 29px; margin-top: 8px; background-color: #fff; border: 2px solid #c4c4c4; position: relative;
  display: flex; padding-left: 11px;
  background-image:
    repeating-linear-gradient(90deg, #333 0 2px, transparent 2px 85px),
    repeating-linear-gradient(90deg, #333 0 2px, transparent 2px 21.250px);
  background-size: 100% 12px, 100% 4px;
  background-position: 8px center, 8px center;
  background-repeat: no-repeat;
}
.ruler span { width: 170px; flex: none; text-align: right; font-size: 29px; line-height: 25px; position: relative; left: 8px; background: linear-gradient(#fff, #fff) right center / 18px 100% no-repeat; padding-right: 1px; }
.ruler-mark { position: absolute; left: -1px; top: 10px; width: 18px; height: 23px; }
.editor { width: 1115px; height: 346px; margin: 12px 0 0 -9px; background: #fff; border: 10px solid #f00; padding-left: 7px; }
.ed-line { height: 33.500px; display: flex; align-items: center; font-size: 24.900px; color: #4a4a4a; }
.ed-k { color: #9a9a9a; flex: none; padding-top: 2px; }
.ed-k1 { width: 170px; }
.ed-k2 { width: 255px; }
.ed-v { background: #ececec; height: 100%; display: flex; align-items: center; padding: 2px 2px 0 1px; }
.ed-cur { border-right: 2px solid #111; padding-right: 0; }
.opt { display: flex; align-items: center; }
.opt > span { padding-top: 2px; }
.opt-1 { height: 44px; margin-top: 12px; }
.opt-2 { height: 35px; margin-top: 13px; }
.opt-3 { height: 35px; margin-top: 20px; }
.cb { width: 34px; height: 35px; background: #fff; border: 2px solid #444; margin-right: 15px; flex: none; }
.sel-resp { width: 511px; height: 44px; margin-left: 24px; padding-left: 4px; }
.dlg-btns { display: flex; align-items: center; height: 56px; margin-top: 30px; }
.btn { width: 194px; height: 56px; background: #e1e1e1; border: 2px solid #b0b0b0; display: flex; align-items: center; justify-content: center; font-size: 29px; padding-top: 2px; }
.btn + .btn { margin-left: 8px; }
.dlg-btns .btn-ok { width: 187px; height: 53px; border-color: #0078d7; margin-left: auto; outline: 10px solid #f00; }
.dlg-btns .btn-ok + .btn { margin-left: 25px; }
.grip { position: absolute; right: 6px; bottom: -30px; width: 18px; height: 18px; }
```
